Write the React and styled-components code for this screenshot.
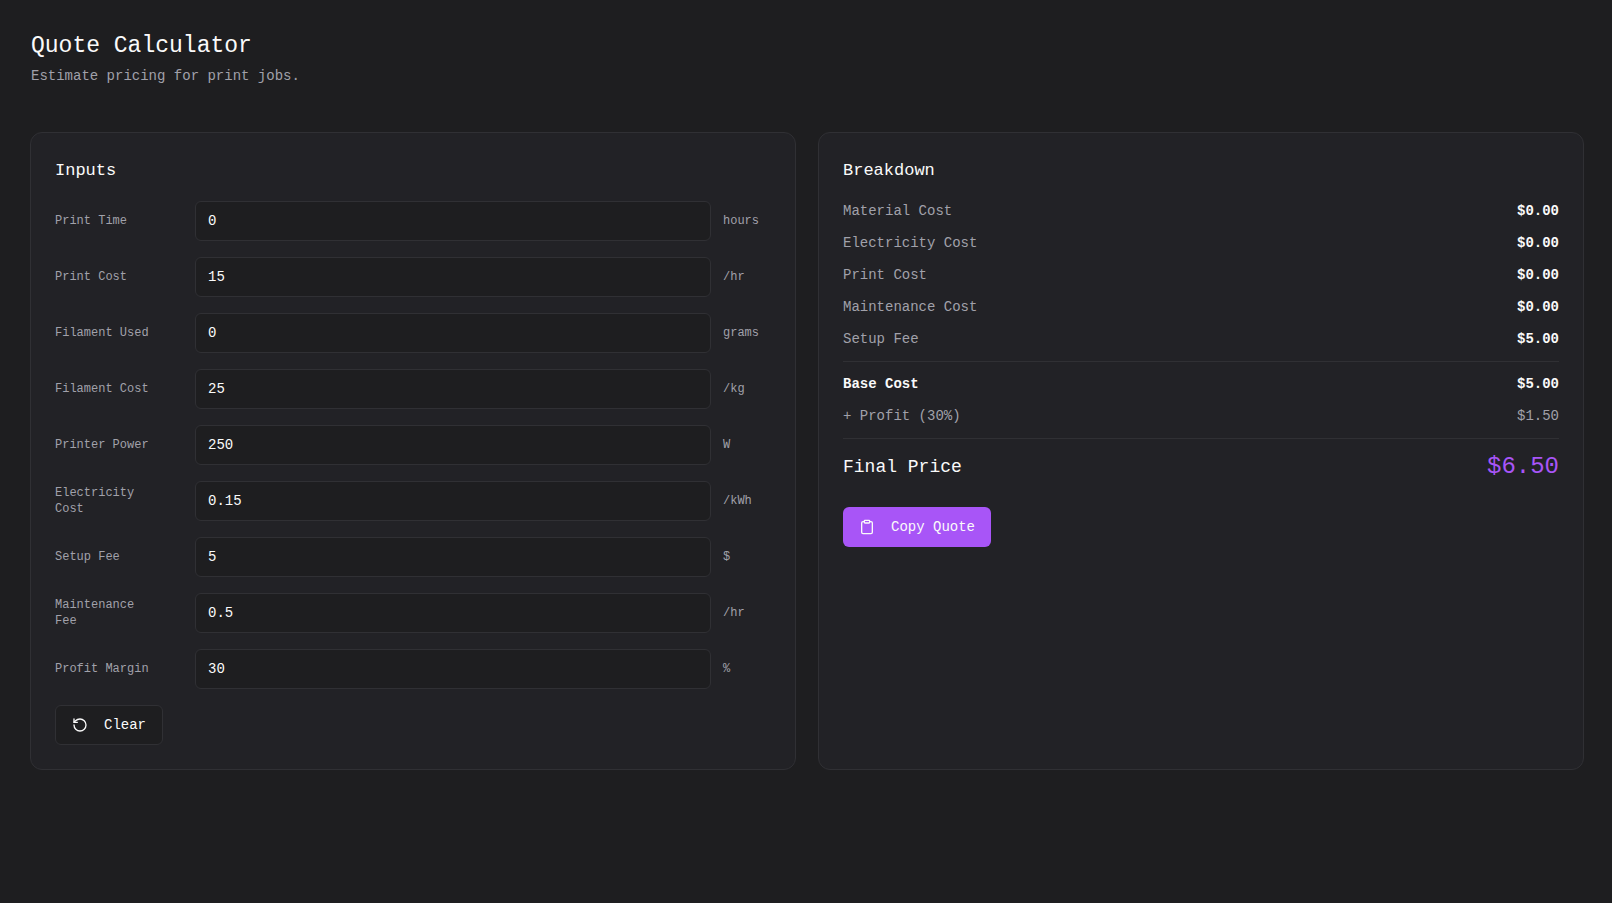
import React, { useState } from "react";
import styled, { createGlobalStyle, css } from "styled-components";
import { Clipboard, RotateCcw } from "lucide-react";

const mono = '"Liberation Mono", "DejaVu Sans Mono", monospace';

const colors = {
  page: "#1e1e20",
  panel: "#222226",
  line: "#303034",
  text: "#fafafa",
  muted: "#a1a1aa",
  accent: "#a855f7",
};

const GlobalStyle = createGlobalStyle`
  *, *::before, *::after { box-sizing: border-box; }
  body {
    margin: 0;
    background: ${colors.page};
    color: ${colors.text};
    font: 400 14px/20px ${mono};
    -webkit-font-smoothing: antialiased;
  }
  h1, h2, p, dl, dt, dd { margin: 0; font-weight: 400; }
`;

const Page = styled.main`
  min-height: 100vh;
  padding: 30px 28px 28px 30px;
  display: flex;
  flex-direction: column;
  gap: 46px;
`;

const Header = styled.header`
  display: flex;
  flex-direction: column;
  gap: 4px;
  padding-left: 1px;
`;

const Title = styled.h1`
  font-size: 23px;
  line-height: 32px;
`;

const Subtitle = styled.p`
  color: ${colors.muted};
`;

const Columns = styled.div`
  display: grid;
  grid-template-columns: repeat(2, minmax(0, 1fr));
  gap: 22px;

  @media (max-width: 900px) {
    grid-template-columns: minmax(0, 1fr);
  }
`;

const Panel = styled.section`
  display: flex;
  flex-direction: column;
  align-items: stretch;
  gap: 16px;
  padding: 24px;
  background: ${colors.panel};
  border: 1px solid ${colors.line};
  border-radius: 12px;
`;

const PanelTitle = styled.h2`
  font-size: 17px;
  line-height: 28px;
`;

const Field = styled.div`
  display: grid;
  grid-template-columns: 128px minmax(0, 1fr) 48px;
  align-items: center;
  gap: 12px;
`;

const FieldLabel = styled.label`
  padding-right: 24px;
  color: ${colors.muted};
  font-size: 12px;
  line-height: 16px;
`;

const Unit = styled.span`
  color: ${colors.muted};
  font-size: 12px;
  line-height: 16px;
`;

const NumberInput = styled.input`
  width: 100%;
  height: 40px;
  padding: 0 12px;
  color: ${colors.text};
  background: ${colors.page};
  border: 1px solid ${colors.line};
  border-radius: 6px;
  font: 400 14px/20px ${mono};
  appearance: textfield;

  &::-webkit-inner-spin-button,
  &::-webkit-outer-spin-button {
    appearance: none;
    margin: 0;
  }
  &:focus-visible {
    outline: 2px solid ${colors.accent};
  }
`;

const Button = styled.button`
  align-self: flex-start;
  display: inline-flex;
  align-items: center;
  gap: 16px;
  height: 40px;
  padding: 0 16px;
  color: ${colors.text};
  background: ${colors.page};
  border: 1px solid ${colors.line};
  border-radius: 6px;
  font: 500 14px/20px ${mono};
  cursor: pointer;

  ${(p) =>
    p.$primary &&
    css`
      margin-top: 8px;
      background: ${colors.accent};
      border: 0;
    `}
`;

const Group = styled.dl`
  display: flex;
  flex-direction: column;
  gap: 12px;

  & + & {
    margin-top: -4px;
    padding-top: 12px;
    border-top: 1px solid ${colors.line};
  }
`;

const Row = styled.div`
  display: flex;
  justify-content: space-between;
  align-items: center;
`;

const strong = css`
  color: ${colors.text};
  font-weight: 700;
`;

const Name = styled.dt`
  color: ${colors.muted};
  ${(p) => p.$strong && strong}
`;

const Amount = styled.dd`
  color: ${colors.muted};
  ${(p) => p.$strong && strong}
`;

const FinalName = styled.dt`
  font-size: 18px;
  line-height: 28px;
`;

const FinalAmount = styled.dd`
  color: ${colors.accent};
  font-size: 24px;
  line-height: 32px;
`;

const fields = [
  { id: "printTime", label: "Print Time", unit: "hours", initial: "0" },
  { id: "printCost", label: "Print Cost", unit: "/hr", initial: "15" },
  { id: "filamentUsed", label: "Filament Used", unit: "grams", initial: "0" },
  { id: "filamentCost", label: "Filament Cost", unit: "/kg", initial: "25" },
  { id: "power", label: "Printer Power", unit: "W", initial: "250" },
  { id: "electricity", label: "Electricity Cost", unit: "/kWh", initial: "0.15" },
  { id: "setupFee", label: "Setup Fee", unit: "$", initial: "5" },
  { id: "maintenance", label: "Maintenance Fee", unit: "/hr", initial: "0.5" },
  { id: "profit", label: "Profit Margin", unit: "%", initial: "30" },
];

const defaults = Object.fromEntries(fields.map((f) => [f.id, f.initial]));
const money = (n) => `$${n.toFixed(2)}`;

export default function App() {
  const [values, setValues] = useState(defaults);
  const n = (id) => Number(values[id]) || 0;

  const costs = [
    ["Material Cost", (n("filamentUsed") / 1000) * n("filamentCost")],
    ["Electricity Cost", (n("power") / 1000) * n("printTime") * n("electricity")],
    ["Print Cost", n("printTime") * n("printCost")],
    ["Maintenance Cost", n("printTime") * n("maintenance")],
    ["Setup Fee", n("setupFee")],
  ];
  const base = costs.reduce((sum, [, amount]) => sum + amount, 0);
  const profit = (base * n("profit")) / 100;
  const total = base + profit;

  return (
    <>
      <GlobalStyle />
      <Page>
        <Header>
          <Title>Quote Calculator</Title>
          <Subtitle>Estimate pricing for print jobs.</Subtitle>
        </Header>
        <Columns>
          <Panel>
            <PanelTitle>Inputs</PanelTitle>
            {fields.map((f) => (
              <Field key={f.id}>
                <FieldLabel htmlFor={f.id}>{f.label}</FieldLabel>
                <NumberInput
                  id={f.id}
                  type="number"
                  min="0"
                  step="any"
                  value={values[f.id]}
                  onChange={(e) => setValues({ ...values, [f.id]: e.target.value })}
                />
                <Unit>{f.unit}</Unit>
              </Field>
            ))}
            <Button type="button" onClick={() => setValues(defaults)}>
              <RotateCcw size={16} strokeWidth={2} aria-hidden="true" />
              Clear
            </Button>
          </Panel>
          <Panel>
            <PanelTitle>Breakdown</PanelTitle>
            <Group>
              {costs.map(([name, amount]) => (
                <Row key={name}>
                  <Name>{name}</Name>
                  <Amount $strong>{money(amount)}</Amount>
                </Row>
              ))}
            </Group>
            <Group>
              <Row>
                <Name $strong>Base Cost</Name>
                <Amount $strong>{money(base)}</Amount>
              </Row>
              <Row>
                <Name>+ Profit ({n("profit")}%)</Name>
                <Amount>{money(profit)}</Amount>
              </Row>
            </Group>
            <Group>
              <Row>
                <FinalName>Final Price</FinalName>
                <FinalAmount>{money(total)}</FinalAmount>
              </Row>
            </Group>
            <Button
              type="button"
              $primary
              onClick={() => navigator.clipboard?.writeText(`Final Price: ${money(total)}`)}
            >
              <Clipboard size={16} strokeWidth={2} aria-hidden="true" />
              Copy Quote
            </Button>
          </Panel>
        </Columns>
      </Page>
    </>
  );
}
